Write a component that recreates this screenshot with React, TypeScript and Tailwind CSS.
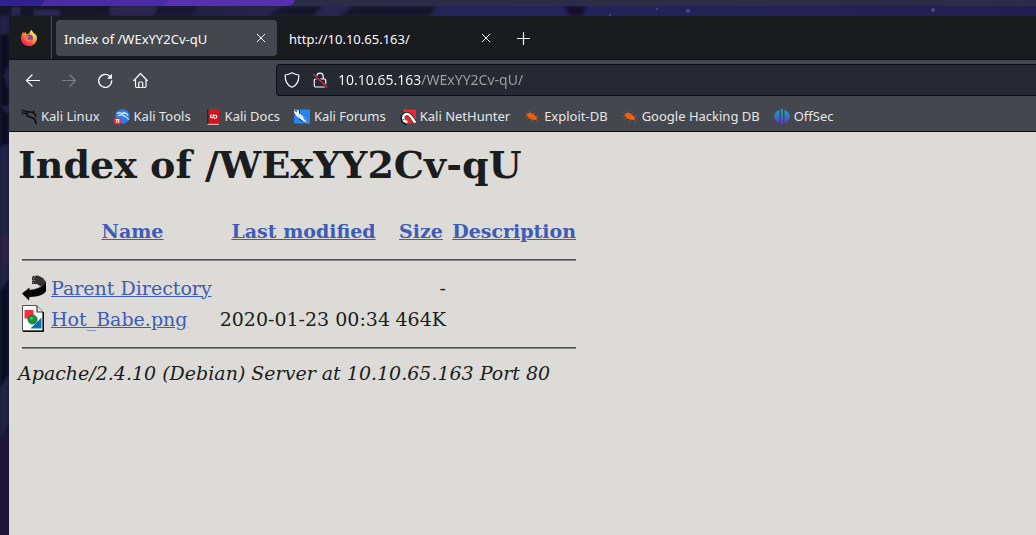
import type { ReactNode } from "react";

function Wallpaper() {
  return (
    <svg
      aria-hidden="true"
      className="absolute inset-0 h-full w-full"
      viewBox="0 0 1036 535"
      preserveAspectRatio="none"
    >
      <defs>
        <filter id="soft">
          <feGaussianBlur stdDeviation="1.5" />
        </filter>
        <linearGradient id="night" x1="0" x2="1">
          <stop offset="0" stopColor="#17152f" />
          <stop offset="0.3" stopColor="#29264f" />
          <stop offset="0.45" stopColor="#25235a" />
          <stop offset="1" stopColor="#241f50" />
        </linearGradient>
      </defs>
      <rect width="1036" height="535" fill="url(#night)" />
      <g filter="url(#soft)">
        <path d="M0 0h110v16H0z" fill="#151329" />
        <path d="M12 7h8v9h-8zM34 10h26v6H34z" fill="#292753" />
        <path d="M110 6h60l-10 10h-50z" fill="#29274f" />
        <path d="M158 6h40l-6 10h-38z" fill="#191633" />
        <path d="M270 16l12-10h40l-8 10zM340 16l12-10h84l-6 10z" fill="#14122a" />
        <path d="M564 6h22l-4 10h-12z" fill="#13112a" />
        <path d="M0 16h9v519H0z" fill="#232148" />
        <path d="M0 34h9v30l-5 12 5 16v14H0zM0 106l9 8v22l-5 10H0zM4 130h5v16l-5-2zM0 292l9-14v96l-9 14z" fill="#100f21" />
        <path d="M0 235h9v30H0z" fill="#2a2249" />
        <path d="M0 440l9-20v115H0z" fill="#1b1939" />
      </g>
      <g fill="#4b4794">
        <circle cx="688" cy="11" r="2" />
        <circle cx="657" cy="9" r="1" />
        <circle cx="933" cy="10" r="2" />
        <circle cx="610" cy="15" r="1" />
      </g>
      <rect width="1036" height="6" fill="#2d2c47" />
      <path d="M0 0h295q-2 6-8 6H0z" fill="#5730ad" />
      <path d="M0 0h168q-2 5-7 6H0z" fill="#4a2ba6" />
      <path d="M0 0h45q-2 5-7 6H0z" fill="#32208e" />
    </svg>
  );
}

function FirefoxLogo() {
  return (
    <svg viewBox="0 0 16 16" className="size-4" aria-hidden="true">
      <defs>
        <linearGradient id="flame" x1="0.85" y1="0.1" x2="0.2" y2="0.95">
          <stop offset="0" stopColor="#fff44f" />
          <stop offset="0.35" stopColor="#ffb02e" />
          <stop offset="0.65" stopColor="#ff5634" />
          <stop offset="1" stopColor="#f0128a" />
        </linearGradient>
      </defs>
      <path
        d="M15.4 5.5c-.4-.9-1.1-1.8-1.7-2.1.4.8.6 1.4.7 2C13.5 3.200 11.500 2.500 10.600 0c-1.500 1-2.100 2.500-2.200 3.500-.9 0-1.700.3-2.400.7C5.200 3.800 4.600 3.200 4.700 2 3.700 2.500 3.200 3.100 2.800 3.500c-.3-.4-.3-1.300-.2-1.700C1.500 2.500.6 4.300.4 5.500A7.800 7.800 0 0 0 8 16a7.800 7.800 0 0 0 7.400-10.500z"
        fill="url(#flame)"
      />
      <circle cx="8.300" cy="8" r="3.600" fill="#7441d8" />
      <path
        d="M3.300 5.600c1-.5 2.200-.3 3 .3l1.800.2c.2.8-.9 1.200-1.500 1.500-.4 1.800 1.300 2.600 2.800 2 .8-.3 1.500-.2 1.500.3-.8 2-3 2.600-5 1.700C3.700 10.600 2.800 8 3.300 5.600z"
        fill="#ff7a30"
      />
    </svg>
  );
}

function Stroke({ children, className = "" }: { children: ReactNode; className?: string }) {
  return (
    <svg
      viewBox="0 0 16 16"
      aria-hidden="true"
      fill="none"
      stroke="currentColor"
      strokeWidth="1.2"
      strokeLinecap="round"
      strokeLinejoin="round"
      className={`size-4 shrink-0 ${className}`}
    >
      {children}
    </svg>
  );
}

const CloseIcon = () => (
  <Stroke>
    <path d="M4.200 4.200l7.600 7.600M11.800 4.200l-7.600 7.600" strokeWidth="1" />
  </Stroke>
);

const KaliLinux = () => (
  <svg viewBox="0 0 16 16" className="size-4" aria-hidden="true" fill="none" stroke="#08090b" strokeLinecap="round">
    <path d="M.5.500c2 2 4 .800 8 2.400M.3 3.300c2.700-.3 5-.6 8.200-.1M1 5.500c2-.8 4-1.400 6-1.200" strokeWidth="0.900" />
    <path d="M5.500 4.500c0 2.800 2.500 3.600 5 4 2.500.4 4 2 4.500 6" strokeWidth="1.500" />
    <path d="M8.500 2.800c2.500 0 4 .7 5.500 2.200l1 2.500M12 3.500l1-1.500" strokeWidth="1.300" />
  </svg>
);

const KaliTools = () => (
  <svg viewBox="0 0 16 16" className="size-4" aria-hidden="true">
    <circle cx="8.500" cy="7.500" r="7.300" fill="#287cf0" />
    <path d="M2.500 4.500c3-1.500 5-.5 8 .5M4 7c2-1.500 4-1.500 6 0s4 1 4.500 4M9 3.500c2.500 0 4 1 5 3" fill="none" stroke="#d8ecff" strokeWidth="1.200" />
    <circle cx="3.600" cy="12" r="3.600" fill="#e8313c" />
    <path d="M1.800 10.500h3.600M2.800 10.500v3.300M4.700 10.500v3.300" stroke="#fff" strokeWidth="1" />
  </svg>
);

const KaliDocs = () => (
  <svg viewBox="0 0 16 16" className="size-4" aria-hidden="true">
    <path d="M2 0h12v15H2z" fill="#d9131b" />
    <path d="M2 0h1.500v15H2z" fill="#1d2a4c" />
    <path d="M2.500 14.800H14V16H2.500z" fill="#c9b6bb" />
    <path
      d="M6.500 5.500c-1.300.8-1.300 3.200.2 3.200 1.300 0 1.500-.8 2-1.700s2.800-1.200 3 .2c.2 1.200-.4 2-1.200 2.300M8.500 5L8.200 7M9.500 8.300L9.200 10"
      fill="none"
      stroke="#fff"
      strokeWidth="1.200"
    />
  </svg>
);

const KaliForums = () => (
  <svg viewBox="0 0 16 16" className="size-4" aria-hidden="true">
    <path d="M2 .500h14V14.500H0L0 8z" fill="#2187f5" />
    <path d="M0 0l3.500 2L5 .8l1.500 4.400 4 3.300L15.500 15l-6-3L5.500 9.500 2.500 7 0 3.500z" fill="#eef4fb" />
    <path d="M0 1l3 2M5.500 1v4M9.500 8.500L14.500 14.500M5 9.500l3 2.500" stroke="#17202c" strokeWidth="0.900" />
  </svg>
);

const KaliNetHunter = () => (
  <svg viewBox="0 0 16 16" className="size-4" aria-hidden="true">
    <path d="M3 .500h13V14.500H6z" fill="#ee2630" />
    <path d="M7 14C1 13 .5 5 7 5c4 0 5 4.500 8.500 9" fill="none" stroke="#15191f" strokeWidth="3.800" />
    <path d="M7.500 13.300C2 12.500 2 5 7 5c3.500 0 5 4.500 8.300 8.800" fill="none" stroke="#fff" strokeWidth="2.600" />
    <path d="M.5 1.500l4 2.300M2.500 11l2-1" stroke="#2a2f37" strokeWidth="0.800" />
  </svg>
);

const ExploitBug = () => (
  <svg viewBox="0 0 16 16" className="size-4" aria-hidden="true">
    <path d="M3 5c1.500-1.600 4-1.500 6 0l3 2.500c1.500 1.500 1 3.300 0 3.500-2.500.4-6.500-1-8-3C3 7 2.500 6 3 5z" fill="#f16010" />
    <path d="M3.200 5L1.500 3.500M6.500 4L5 2M9.500 5.500l1-2M11.500 7.500l3.500-.7M3.500 7.500L.5 7.300M5 9l-2.500 1.500M8 10.500L7 12.500M12 10.500l2 2.500" stroke="#a8562c" strokeWidth="0.800" fill="none" />
  </svg>
);

const OffSec = () => (
  <svg viewBox="0 0 16 16" className="size-4" aria-hidden="true">
    <defs>
      <linearGradient id="offsec" x1="0" y1="0" x2="0" y2="16" gradientUnits="userSpaceOnUse">
        <stop offset="0" stopColor="#0fa9b8" />
        <stop offset="0.500" stopColor="#3372cf" />
        <stop offset="1" stopColor="#7420dd" />
      </linearGradient>
    </defs>
    <path d="M5.500.7v13.500C-1.500 11 -1.500 3.500 5.500.7zM7 0h2v16H7zM10.500.7c7 2.800 7 10.300 0 13.500z" fill="url(#offsec)" />
  </svg>
);

const bookmarks = [
  { label: "Kali Linux", icon: <KaliLinux /> },
  { label: "Kali Tools", icon: <KaliTools /> },
  { label: "Kali Docs", icon: <KaliDocs /> },
  { label: "Kali Forums", icon: <KaliForums /> },
  { label: "Kali NetHunter", icon: <KaliNetHunter /> },
  { label: "Exploit-DB", icon: <ExploitBug /> },
  { label: "Google Hacking DB", icon: <ExploitBug /> },
  { label: "OffSec", icon: <OffSec /> },
];

function Tab({ title, active = false }: { title: string; active?: boolean }) {
  return (
    <div className={`flex h-9 w-[221px] shrink-0 items-center rounded pr-2 pl-2 ${active ? "bg-[#44474e]" : ""}`}>
      <button type="button" role="tab" aria-selected={active} className="flex-1 pt-1 text-left">
        {title}
      </button>
      <button type="button" aria-label={`Close ${title}`}>
        <CloseIcon />
      </button>
    </div>
  );
}

function TabStrip() {
  return (
    <div className="flex h-11 items-center border-b border-[#101115] bg-[#1a1b1f]">
      <button type="button" aria-label="Firefox View" className="flex h-full w-[43px] items-center justify-center border-r border-[#4b4c52] pr-0.5">
        <FirefoxLogo />
      </button>
      <div role="tablist" className="ml-1 flex gap-1">
        <Tab title="Index of /WExYY2Cv-qU" active />
        <Tab title="http://10.10.65.163/" />
      </div>
      <button type="button" aria-label="New tab" className="ml-3.5">
        <Stroke>
          <path d="M7.500 2.500v12M1.500 8.500h12" />
        </Stroke>
      </button>
    </div>
  );
}

function Toolbar() {
  return (
    <div className="flex h-10 items-center pl-4">
      <div className="flex w-[251px] shrink-0 gap-5">
        <button type="button" aria-label="Back">
          <Stroke>
            <path d="M14.500 8.500H1.500M7 3L1.500 8.500 7 14" />
          </Stroke>
        </button>
        <button type="button" aria-label="Forward" disabled className="text-[#7d7f84]">
          <Stroke>
            <path d="M1.500 8.500h13M9 3l5.500 5.500L9 14" />
          </Stroke>
        </button>
        <button type="button" aria-label="Reload">
          <Stroke>
            <path d="M14.700 9A6.500 6.500 0 1 1 12.500 4" strokeWidth="1.400" />
            <path d="M15 1.800v5h-5z" fill="currentColor" stroke="none" />
          </Stroke>
        </button>
        <button type="button" aria-label="Home">
          <Stroke>
            <path d="M.8 8.500L7.500 1.500l6.700 7M2.500 7v7q0 1.500 1.500 1.500h7.500q1.500 0 1.500-1.500V7M5.700 15.500v-4.500q0-1 1-1h2q1 0 1 1v4.500" />
          </Stroke>
        </button>
      </div>
      <div className="flex h-8 flex-1 items-center rounded-l border border-r-0 border-[#0e0f14] bg-[#272932] pl-[7px]">
        <Stroke>
          <path d="M8 .8c2.500 1.400 4.500 2 6.800 2.200C15 8.500 12.500 13.500 8 15.300 3.500 13.500 1 8.500 1.200 3 3.500 2.800 5.500 2.200 8 .8z" />
        </Stroke>
        <Stroke className="ml-3">
          <path d="M4.800 7V4.300a3.200 3.200 0 0 1 6.400 0V7M3.500 7h9q1.200 0 1.200 1.200v5.600q0 1.200-1.200 1.200h-9q-1.200 0-1.200-1.200V8.200Q2.300 7 3.500 7z" />
          <path d="M1.500 2.500l13.500 12.500" stroke="#272932" strokeWidth="3" />
          <path d="M1.500 2.500l13.500 12.500" stroke="#e2244f" strokeWidth="1.200" />
        </Stroke>
        <input
          aria-label="Address"
          defaultValue="10.10.65.163/WExYY2Cv-qU/"
          className="ml-2.5 min-w-0 flex-1 bg-[linear-gradient(90deg,#fbfbfe_83px,#a0a1a5_83px)] bg-clip-text text-sm text-transparent outline-none"
        />
      </div>
    </div>
  );
}

function BookmarksBar() {
  return (
    <nav aria-label="Bookmarks" className="flex h-8 items-center gap-3.5 overflow-hidden border-b border-[#101115] pt-0.5 pl-3">
      {bookmarks.map(({ label, icon }) => (
        <a key={label} href="#" className="flex shrink-0 items-center gap-1 whitespace-nowrap text-[#e6e6e8]">
          {icon}
          {label}
        </a>
      ))}
    </nav>
  );
}

const BackIcon = () => (
  <svg viewBox="0 0 24 26" className="block h-[26px] w-6" role="img" aria-label="Parent folder">
    <path d="M10 1l6-.5L21 3l3 4v5l-6-1-3-2h-5z" fill="#333" />
    <path d="M10 1h1v1h-1zM12 1h1v1h-1zM11 3h1v1h-1zM10 5h1v1h-1zM12 5h1v1h-1zM11 7h1v1h-1z" fill="#999" />
    <path d="M24 7v9c-2 4-7 5.500-16.500 6L7 25.500 0 18.500 7.500 12.500V15C14 14.500 20 12 24 7z" fill="#000" />
    <path d="M8 14.500c6-.2 10-1.500 14-5" fill="none" stroke="#777" strokeWidth="0.500" />
  </svg>
);

const ImageIcon = () => (
  <svg viewBox="0 0 22 27" className="block h-[27px] w-[22px]" role="img" aria-label="Image">
    <path d="M.5.500H15L21 7v19H.5z" fill="#fff" stroke="#555" />
    <path d="M15 1v6h6" fill="#e5e5e5" stroke="#333" strokeWidth="1.200" />
    <path d="M21.300 7v19.300H1" fill="none" stroke="#111" strokeWidth="1.400" />
    <path d="M2.500 5h9v8.500h-9z" fill="#fb2f36" />
    <path d="M19.500 12.500v11H8.500z" fill="#0872b0" />
    <circle cx="10.500" cy="14.500" r="4.600" fill="#14963f" stroke="#0a5f26" strokeWidth="0.700" />
    <circle cx="9.500" cy="13.300" r="1.400" fill="#52c673" />
  </svg>
);

function Rule({ className }: { className: string }) {
  return (
    <tr>
      <td colSpan={5}>
        <hr className={`h-0.5 border-t border-b border-t-[#515255] border-b-[#808184] ${className}`} />
      </td>
    </tr>
  );
}

const link = "text-[#3d5bb9] underline";

function Listing() {
  return (
    <main className="flex-1 bg-[#dcdbd7] pt-2 pl-[9px] font-['DejaVu_Serif',serif] text-[19px] leading-[22px] text-[#1b1c1d]">
      <h1 className="text-[38px] leading-[50px] font-bold">Index of /WExYY2Cv-qU</h1>
      <table className="mt-[29px] ml-1 w-[554px] table-fixed border-collapse whitespace-nowrap">
        <colgroup>
          <col className="w-[29px]" />
          <col className="w-[163px]" />
          <col className="w-[179px]" />
          <col className="w-[56px]" />
          <col className="w-[127px]" />
        </colgroup>
        <thead>
          <tr className="h-6">
            <th />
            <th><a href="#" className={link}>Name</a></th>
            <th><a href="#" className={link}>Last modified</a></th>
            <th><a href="#" className={link}>Size</a></th>
            <th className="text-right"><a href="#" className={link}>Description</a></th>
          </tr>
        </thead>
        <tbody>
          <Rule className="mt-4 mb-[11px]" />
          <tr className="h-[31px]">
            <td><BackIcon /></td>
            <td><a href="#" className={link}>Parent Directory</a></td>
            <td />
            <td className="pr-[3px] text-right">-</td>
            <td />
          </tr>
          <tr className="h-[31px]">
            <td><ImageIcon /></td>
            <td><a href="#" className={link}>Hot_Babe.png</a></td>
            <td className="pr-[3px] text-right">2020-01-23 00:34</td>
            <td className="pr-[3px] text-right">464K</td>
            <td />
          </tr>
          <Rule className="mt-[13px] mb-[13px]" />
        </tbody>
      </table>
      <address className="italic">Apache/2.4.10 (Debian) Server at 10.10.65.163 Port 80</address>
    </main>
  );
}

export default function App() {
  return (
    <div className="relative flex min-h-screen bg-[#1b1937] pt-4 pl-[9px]">
      <Wallpaper />
      <div className="relative flex min-w-0 flex-1 flex-col">
        <header className="bg-[#44474e] font-['Noto_Sans',sans-serif] text-[13px] text-[#fbfbfe]">
          <TabStrip />
          <Toolbar />
          <BookmarksBar />
        </header>
        <Listing />
      </div>
    </div>
  );
}
